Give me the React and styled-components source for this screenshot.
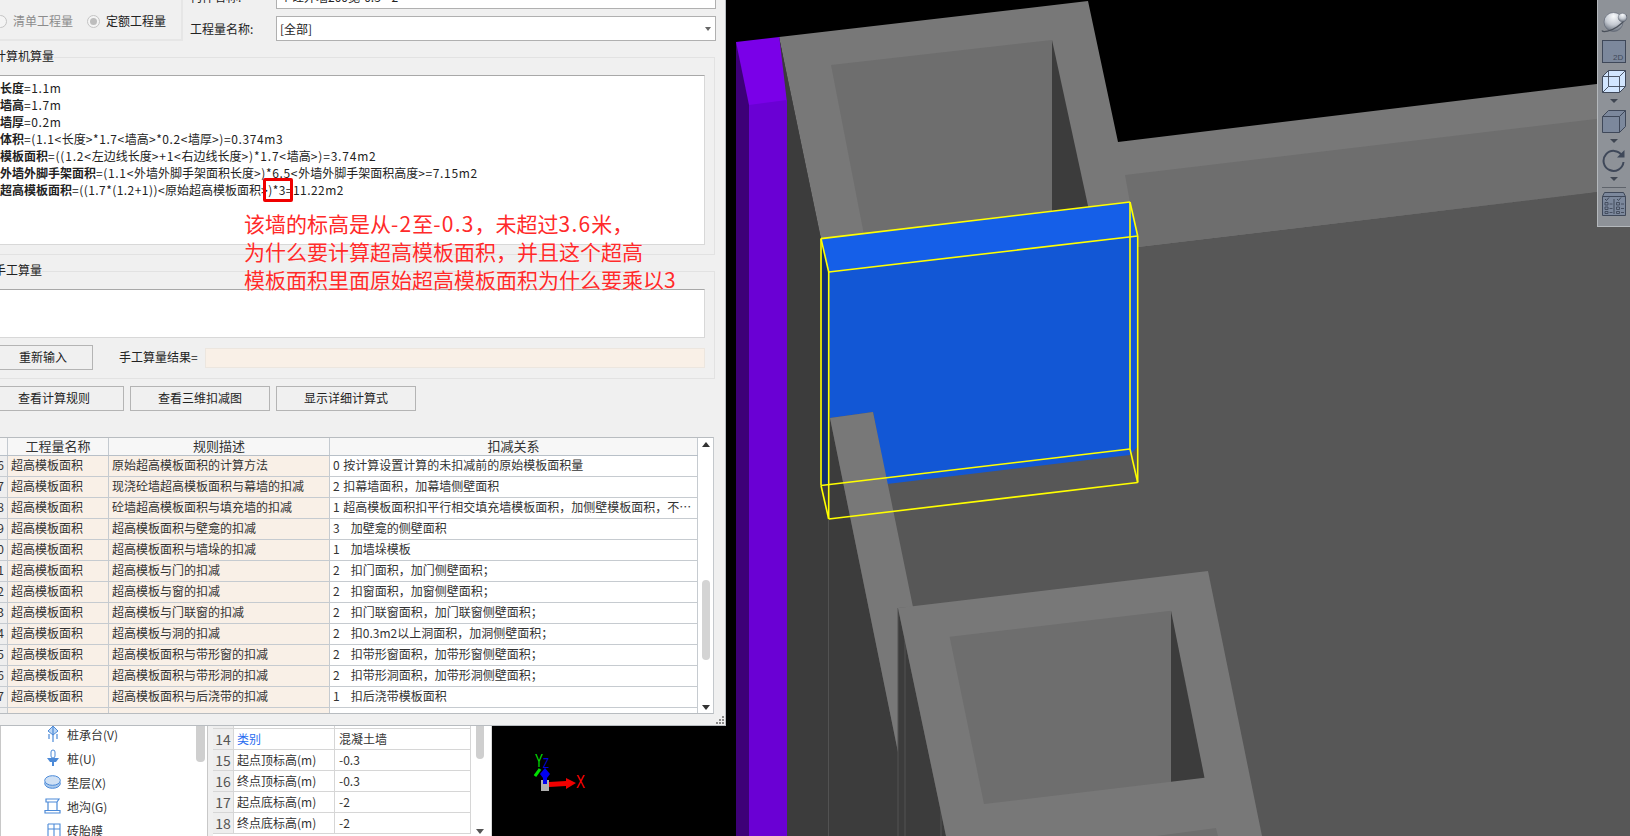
import React from "react";
import styled, { createGlobalStyle } from "styled-components";

const Global = createGlobalStyle`
  html, body { margin: 0; padding: 0; background: #f0f0f0; overflow: hidden; }
  * { box-sizing: border-box; }
  body { font-family: "Noto Sans CJK SC", "Noto Sans", sans-serif; font-size: 12px; color: #222; }
`;

const Page = styled.div`
  position: relative;
  width: 1630px;
  height: 836px;
  overflow: hidden;
  display: flex;
  background: #f0f0f0;
`;

/* ---------- app behind the dialog ---------- */
const TreePanel = styled.div`
  width: 208px;
  height: 836px;
  flex: none;
  background: #fff;
  border-left: 1px solid #c8c8c8;
  border-right: 1px solid #c8c8c8;
  display: flex;
  overflow: hidden;
  padding-top: 722px;
`;
const TreeList = styled.div`
  flex: 1;
  padding-left: 44px;
`;
const TreeItem = styled.div`
  height: 24px;
  display: flex;
  align-items: center;
  gap: 6px;
  color: #333;
  white-space: nowrap;
`;
const TreeScroll = styled.div`
  width: 9px;
  height: 40px;
  margin-right: 2px;
  background: #cfcfcf;
  border-radius: 0 0 4px 4px;
`;
const PropsPanel = styled.div`
  width: 279px;
  height: 836px;
  flex: none;
  margin-left: 5px;
  background: #fff;
  display: flex;
  overflow: hidden;
  padding-top: 708px;
`;
const PropsTable = styled.div`
  width: 258px;
  flex: none;
`;
const PropRow = styled.div`
  display: grid;
  grid-template-columns: 21px 101px 136px;
  height: 21px;
  border-bottom: 1px solid #d6d6d6;
  align-items: stretch;
`;
const PropNum = styled.div`
  background: #eeeeee;
  color: #555;
  font-size: 14px;
  line-height: 20px;
  text-align: center;
  border-right: 1px solid #d6d6d6;
`;
const PropName = styled.div`
  color: ${(p) => (p.$blue ? "#2a6cf0" : "#333")};
  line-height: 20px;
  padding-left: 3px;
  border-right: 1px solid #d6d6d6;
`;
const PropValue = styled.div`
  color: #333;
  line-height: 20px;
  padding-left: 4px;
  border-right: 1px solid #d6d6d6;
`;
const PropsScroll = styled.div`
  flex: 1;
  position: relative;
  border-right: 1px solid #d8d8d8;
`;
const PropsThumb = styled.div`
  position: absolute;
  left: 5px;
  top: 0;
  width: 8px;
  height: 51px;
  background: #cfcfcf;
  border-radius: 0 0 4px 4px;
`;
const PropsArrow = styled.div`
  position: absolute;
  left: 5px;
  top: 121px;
  border-left: 4px solid transparent;
  border-right: 4px solid transparent;
  border-top: 5px solid #555;
`;
const Viewport = styled.div`
  flex: 1;
  height: 836px;
  background: #000;
  overflow: hidden;
  svg { display: block; }
`;

/* ---------- dialog ---------- */
const Dialog = styled.div`
  position: absolute;
  left: -20px;
  top: -20px;
  width: 745.5px;
  height: 746px;
  background: #f0f0f0;
  border-right: 1px solid #b8bcc0;
  border-bottom: 1px solid #b8bcc0;
  display: flex;
  flex-direction: column;
`;
const TopRow = styled.div`
  height: 61px;
  flex: none;
  display: flex;
`;
const RadioGroup = styled.div`
  width: 203px;
  height: 61px;
  flex: none;
  border-right: 2px solid #e6e6e6;
  border-bottom: 2px solid #e6e6e6;
  display: flex;
  align-items: center;
  padding: 33px 0 10px 13.5px;
  gap: 13.5px;
`;
const RadioItem = styled.div`
  display: flex;
  align-items: center;
  gap: 6.5px;
  color: ${(p) => (p.$disabled ? "#8c8c8c" : "#222")};
  line-height: 20px;
  white-space: nowrap;
`;
const RadioDot = styled.span`
  width: 13px;
  height: 13px;
  flex: none;
  border-radius: 50%;
  border: 1px solid #c4c4c4;
  background: #f4f4f4;
  display: flex;
  align-items: center;
  justify-content: center;
  &::after {
    content: "";
    width: 7px;
    height: 7px;
    border-radius: 50%;
    background: ${(p) => (p.$on ? "#bdbdbd" : "transparent")};
  }
`;
const Fields = styled.div`
  flex: none;
  width: 525.5px;
  margin-left: 7px;
  padding-top: 4px;
  display: flex;
  flex-direction: column;
  gap: 7px;
`;
const FieldRow = styled.div`
  height: 25px;
  display: flex;
  align-items: center;
`;
const FieldLabel = styled.div`
  width: 86px;
  flex: none;
  color: #222;
`;
const SelectBox = styled.div`
  flex: 1;
  height: 25px;
  background: #fff;
  border: 1px solid #b0b0b0;
  padding-left: 3px;
  line-height: 24px;
  display: flex;
  justify-content: space-between;
  align-items: center;
  color: #222;
`;
const Caret = styled.span`
  margin-right: 4px;
  border-left: 3px solid transparent;
  border-right: 3px solid transparent;
  border-top: 4px solid #666;
`;
const Group = styled.fieldset`
  margin: ${(p) => p.$mt}px 9.5px 0 10px;
  height: ${(p) => p.$h}px;
  flex: none;
  border: 1px solid #e2e2e2;
  padding: 10px 9px 0 0;
  min-width: 0;
  display: flex;
  flex-direction: column;
`;
const Legend = styled.legend`
  margin-left: 3px;
  padding: 0;
  line-height: 14px;
  height: 16px;
  color: #222;
`;
const CalcBox = styled.div`
  height: 170px;
  background: #fff;
  border: 1px solid #d8d8d8;
  border-top: 1px solid #a8a8a8;
  padding: 3px 0 0 8px;
  line-height: 17px;
  color: #222;
  white-space: nowrap;
`;
const CalcLine = styled.div`
  height: 17px;
`;
const Strong = styled.span`
  font-weight: 700;
`;
const Latin = styled.span`
  letter-spacing: ${(p) => p.$gap}px;
`;
const ManualBox = styled.div`
  height: 49px;
  background: #fff;
  border: 1px solid #d8d8d8;
  border-top: 1px solid #a8a8a8;
  flex: none;
`;
const ManualRow = styled.div`
  margin-top: 7px;
  height: 25px;
  display: flex;
  align-items: center;
`;
const Btn = styled.button`
  width: ${(p) => p.$w}px;
  height: 25px;
  flex: none;
  margin: 0;
  padding: 0 0 2px;
  background: #f0f0f0;
  border: 1px solid #b4b4b4;
  font: inherit;
  color: #222;
`;
const ResetBtn = styled(Btn)`
  margin-left: 2px;
`;
const ResultLabel = styled.div`
  margin-left: 26px;
  width: 86px;
  padding-bottom: 2px;
  flex: none;
  white-space: nowrap;
`;
const ResultField = styled.div`
  flex: 1;
  height: 20px;
  background: #f9f0e7;
  border: 1px solid #ece6df;
`;
const ActionRow = styled.div`
  margin: 7px 0 0 4px;
  display: flex;
  gap: 6px;
`;
const RulesWrap = styled.div`
  margin-top: 26px;
  height: 277px;
  width: 734px;
  flex: none;
  display: flex;
  background: #fff;
  border-top: 1px solid #b8bcc0;
  border-bottom: 1px solid #b8bcc0;
  border-right: 1px solid #c4c8cc;
  overflow: hidden;
`;
const RulesBody = styled.div`
  width: 718px;
  flex: none;
`;
const HeaderRow = styled.div`
  display: grid;
  grid-template-columns: 28px 101px 221px 368px;
  height: 18px;
  border-bottom: 1px solid #b8c0c8;
  background: #f7f7f7;
`;
const HeaderCell = styled.div`
  font-size: 13px;
  line-height: 16px;
  text-align: center;
  color: #333;
  border-right: 1px solid #c4cad0;
`;
const RuleRow = styled.div`
  display: grid;
  grid-template-columns: 28px 101px 221px 368px;
  height: 21px;
  border-bottom: 1px solid #c6cbd0;
`;
const NumCell = styled.div`
  background: #eeeeee;
  line-height: 18px;
  text-align: right;
  padding-right: 3px;
  color: #333;
  border-right: 1px solid #c6cbd0;
`;
const Cell = styled.div`
  background: ${(p) => (p.$tinted ? "#f9f0e7" : "#fff")};
  line-height: 18px;
  padding-left: 3px;
  color: #333;
  white-space: pre;
  word-spacing: ${(p) => (p.$tinted ? 0 : 1)}px;
  overflow: hidden;
  text-overflow: ellipsis;
  border-right: 1px solid #c6cbd0;
`;
const ScrollTrack = styled.div`
  flex: 1;
  position: relative;
  display: flex;
  flex-direction: column;
  align-items: center;
`;
const ArrowUp = styled.div`
  margin-top: 4px;
  border-left: 4px solid transparent;
  border-right: 4px solid transparent;
  border-bottom: 5px solid #333;
`;
const Thumb = styled.div`
  width: 8px;
  height: 80px;
  margin-top: 133px;
  background: #d4d4d4;
  border-radius: 4px;
`;
const ArrowDown = styled.div`
  margin-top: auto;
  margin-bottom: 3px;
  border-left: 4px solid transparent;
  border-right: 4px solid transparent;
  border-top: 5px solid #333;
`;
const Footer = styled.div`
  flex: 1;
  display: flex;
  justify-content: flex-end;
  align-items: flex-end;
  padding: 0 1px 1px 0;
`;

/* ---------- overlays ---------- */
const RedBox = styled.div`
  position: absolute;
  left: 263px;
  top: 178px;
  width: 30px;
  height: 24px;
  border: 3px solid #f00000;
  border-radius: 2px;
`;
const Note = styled.div`
  position: absolute;
  left: 244px;
  top: 209px;
  font-size: 21px;
  line-height: 28px;
  color: #ff2a2a;
  white-space: nowrap;
  text-shadow: 0 0 1px #fff;
`;
const Toolbar = styled.div`
  position: absolute;
  right: 0;
  top: 0;
  width: 33px;
  height: 227px;
  background: #8e9298;
  border-left: 1px solid #b4b8bc;
  border-bottom: 1px solid #b4b8bc;
  display: flex;
  flex-direction: column;
  align-items: center;
  padding-top: 11px;
`;
const ToolIcon = styled.svg`
  display: block;
  flex: none;
  margin-top: ${(p) => p.$mt || 0}px;
`;
const ToolCaret = styled.div`
  margin-top: ${(p) => p.$mt || 6}px;
  border-left: 4px solid transparent;
  border-right: 4px solid transparent;
  border-top: 4px solid #3f4652;
`;
const ToolRule = styled.div`
  width: 24px;
  height: 1px;
  background: #5e636b;
  margin-top: 6px;
`;

const C = "#3f4859";
const F = "#7c889c";

const withLatin = (text, gap) =>
  text.split(/([\x21-\x7e]+)/).map((part, i) =>
    /[\x21-\x7e]/.test(part) ? <Latin key={i} $gap={gap}>{part}</Latin> : part
  );

const GlobeIcon = () => (
  <ToolIcon width="27" height="22" viewBox="0 0 27 22">
    <defs>
      <radialGradient id="gb" cx="0.5" cy="0.2" r="0.9">
        <stop offset="0" stopColor="#f8fafc" />
        <stop offset="0.5" stopColor="#c4c9d1" />
        <stop offset="1" stopColor="#4e5663" />
      </radialGradient>
    </defs>
    <circle cx="12.5" cy="11" r="9.5" fill="url(#gb)" stroke="#5a6270" strokeWidth=".6" />
    <path d="M1 19.5 C2 22 10 20 16 16 C22 12 26 7 25 4" fill="none" stroke="#4a505a" strokeWidth="1.4" />
    <circle cx="21.5" cy="6.5" r="4.3" fill="url(#gb)" stroke="#5a6270" strokeWidth=".5" />
  </ToolIcon>
);
const TwoDIcon = () => (
  <ToolIcon $mt={7} width="24" height="23" viewBox="0 0 24 23">
    <rect x=".5" y=".5" width="23" height="22" fill={F} stroke={C} />
    <text x="11" y="20" fontSize="8" fill={C} fontFamily="Liberation Sans, sans-serif">2D</text>
  </ToolIcon>
);
const WireCube = () => (
  <ToolIcon $mt={7} width="24" height="23" viewBox="0 0 24 23">
    <path d="M.5 6.5 L6.5 .5 H23.5 V16.5 L17.5 22.5 H.5 Z" fill="#d2e6ff" stroke={C} />
    <path d="M6.5 .5 V16.5 H23.5 M6.5 16.5 L.5 22.5 M.5 6.5 H17.5 V22.5 M17.5 6.5 L23.5 .5" fill="none" stroke={C} strokeWidth=".9" />
  </ToolIcon>
);
const SolidCube = () => (
  <ToolIcon $mt={7} width="24" height="23" viewBox="0 0 24 23">
    <path d="M.5 6.5 L6.5 .5 H23.5 V16.5 L17.5 22.5 H.5 Z" fill={F} stroke={C} />
    <path d="M.5 6.5 H17.5 V22.5 M17.5 6.5 L23.5 .5" fill="none" stroke={C} />
  </ToolIcon>
);
const RefreshIcon = () => (
  <ToolIcon $mt={6} width="26" height="23" viewBox="0 0 26 23">
    <path d="M21 6.5 A10 10 0 1 0 22.5 13" fill="none" stroke={C} strokeWidth="2" />
    <path d="M23.5 1 V8.5 H16 Z" fill={C} />
  </ToolIcon>
);
const ChecklistIcon = () => (
  <ToolIcon $mt={4} width="24" height="24" viewBox="0 0 24 24">
    <path d="M.5 4.5 L2.5 .5 H21.5 L23.5 4.5 V23.5 H.5 Z" fill={F} stroke={C} />
    <path d="M.5 4.5 H23.5 M12 7 V22" stroke={C} fill="none" />
    <path d="M3 7 l1.5 1.5 L7 5.5 M15 7 l1.5 1.5 L19 5.5" stroke={C} fill="none" />
    <path d="M3 10.5 h3 v2.5 h-3 z M3 15 h3 v2.5 h-3 z M3 19.5 h3 v2 h-3 z M14.5 10.5 h3 v2.5 h-3 z M14.5 15 h3 v2.5 h-3 z M14.5 19.5 h3 v2 h-3 z M7.5 12 h3 M7.5 16.5 h3 M7.5 20.5 h3 M19 12 h3 M19 16.5 h3 M19 20.5 h3" stroke={C} fill="none" strokeWidth=".9" />
  </ToolIcon>
);

const B = "#4c8ad8";
const PileCapIcon = () => (
  <svg width="16" height="18" viewBox="0 0 16 18">
    <path d="M8 1 L13 6 L8 10 L3 6 Z" fill="#bcd6f4" stroke={B} />
    <path d="M8 1 V17 M4 9 V14 M12 9 V14" stroke={B} fill="none" strokeWidth="1.2" />
  </svg>
);
const PileIcon = () => (
  <svg width="16" height="18" viewBox="0 0 16 18">
    <rect x="6" y="1" width="4" height="8" rx="2" fill="#fff" stroke={B} />
    <path d="M2 9 H14 L11 13 H5 Z" fill={B} />
    <path d="M8 13 V17" stroke={B} strokeWidth="2" />
  </svg>
);
const PadIcon = () => (
  <svg width="17" height="14" viewBox="0 0 17 14" style={{ marginLeft: -1 }}>
    <ellipse cx="8.5" cy="8.5" rx="7.8" ry="4.8" fill="#a8c8ec" stroke={B} />
    <ellipse cx="8.5" cy="5.5" rx="7.8" ry="4.8" fill="#cfe0f4" stroke={B} />
  </svg>
);
const TrenchIcon = () => (
  <svg width="17" height="16" viewBox="0 0 17 16" style={{ marginLeft: -1 }}>
    <path d="M2 1 H15 L13 4 H2 Z M4 4 V12 M13 4 V12 M1 12.5 H16 V15 H1 Z" fill="#fff" stroke={B} strokeWidth="1.2" />
  </svg>
);
const BrickIcon = () => (
  <svg width="14" height="14" viewBox="0 0 14 14" style={{ marginLeft: 2 }}>
    <path d="M1 1 H13 V14 M1 1 V14 M7 1 V14 M1 6 H13" fill="#fff" stroke={B} strokeWidth="1.1" />
  </svg>
);

const rules = [
  ["16", "原始超高模板面积的计算方法", "0 按计算设置计算的未扣减前的原始模板面积量"],
  ["17", "现浇砼墙超高模板面积与幕墙的扣减", "2 扣幕墙面积，加幕墙侧壁面积"],
  ["18", "砼墙超高模板面积与填充墙的扣减", "1 超高模板面积扣平行相交填充墙模板面积，加侧壁模板面积，不计算相交部分的面积"],
  ["19", "超高模板面积与壁龛的扣减", "3   加壁龛的侧壁面积"],
  ["20", "超高模板面积与墙垛的扣减", "1   加墙垛模板"],
  ["21", "超高模板与门的扣减", "2   扣门面积，加门侧壁面积；"],
  ["22", "超高模板与窗的扣减", "2   扣窗面积，加窗侧壁面积；"],
  ["23", "超高模板与门联窗的扣减", "2   扣门联窗面积，加门联窗侧壁面积；"],
  ["24", "超高模板与洞的扣减", "2   扣0.3m2以上洞面积，加洞侧壁面积；"],
  ["25", "超高模板面积与带形窗的扣减", "2   扣带形窗面积，加带形窗侧壁面积；"],
  ["26", "超高模板面积与带形洞的扣减", "2   扣带形洞面积，加带形洞侧壁面积；"],
  ["27", "超高模板面积与后浇带的扣减", "1   扣后浇带模板面积"],
];

const calc = [
  ["长度", "=1.1m", 0.6],
  ["墙高", "=1.7m", 0.6],
  ["墙厚", "=0.2m", 0.6],
  ["体积", "=(1.1<长度>*1.7<墙高>*0.2<墙厚>)=0.374m3", 0.6],
  ["模板面积", "=((1.2<左边线长度>+1<右边线长度>)*1.7<墙高>)=3.74m2", 0.8],
  ["外墙外脚手架面积", "=(1.1<外墙外脚手架面积长度>)*6.5<外墙外脚手架面积高度>=7.15m2", 0.65],
  ["超高模板面积", "=((1.7*(1.2+1))<原始超高模板面积>)*3=11.22m2", 0.45],
];

const props = [
  ["13", "", "", false],
  ["14", "类别", "混凝土墙", true],
  ["15", "起点顶标高(m)", "-0.3", false],
  ["16", "终点顶标高(m)", "-0.3", false],
  ["17", "起点底标高(m)", "-2", false],
  ["18", "终点底标高(m)", "-2", false],
];

const box = {
  A: "821,238.6", B: "1130,202", C: "1137.7,236", D: "828.7,272",
  E: "821,485.5", F: "1130,449", G: "1137.7,482.5", H: "828.7,519",
};
const edges = ["AB", "BC", "CD", "DA", "EF", "FG", "GH", "HE", "AE", "BF", "CG", "DH"];

const Scene = () => (
  <svg width="1138" height="836" viewBox="492 0 1138 836">
    <rect x="492" y="0" width="1138" height="836" fill="#000" />
    <polygon points="787,240 1138,246 1630,188 1630,836 787,836" fill="#575757" />
    <polygon points="779,37 1088,1 1118,142 1630,80 1630,188 1138,247 821,260" fill="#787878" />
    <polygon points="1125,175 1630,115 1630,188 1138,247" fill="#6e6e6e" />
    <polygon points="831,65 1052,40 1052,215 865,240" fill="#6e6e6e" />
    <polygon points="1052,40 1090,215 1052,215" fill="#3c3c3c" />
    <polygon points="779,37 821,239 830,418 898,752 898,608 946,836 787,836" fill="#3c3c3c" />
    <polygon points="779,37 821,239 830,300 790,300 787,100" fill="#3c3c3c" />
    <polygon points="822,240 829,272 829,485 822,485" fill="#10306e" />
    <polygon points="821,238.6 1130,202 1137.7,236 828.7,272" fill="#155fe8" />
    <polygon points="829,272 1138,236 1138,446 1130,455 887,484 873,412 830,418" fill="#1257d5" />
    <polygon points="830,418 873,412 913,607 898,608 898,752" fill="#787878" />
    <path d="M828.5 520 V836 M898 608 V836 M905 640 V836 M941 810 V836" stroke="#525252" strokeWidth="1" fill="none" />
    <polygon points="898,608 1208,571 1262,836 946,836" fill="#787878" />
    <polygon points="949.6,636.7 1171,610.7 1171,781.7 984,804" fill="#6e6e6e" />
    <polygon points="1171,610.7 1204.5,777.7 1171,781.7" fill="#3c3c3c" />
    <polygon points="1156,836 1216,828 1218,836" fill="#6e6e6e" />
    <rect x="736" y="42" width="13" height="794" fill="#3d0078" />
    <rect x="749" y="100" width="38" height="736" fill="#6a00d4" />
    <polygon points="736,42 779.3,37 786.7,100 749,105" fill="#7a00e8" />
    {edges.map((e) => {
      const [x1, y1] = box[e[0]].split(",");
      const [x2, y2] = box[e[1]].split(",");
      return <line key={e} x1={x1} y1={y1} x2={x2} y2={y2} stroke="#ffff00" strokeWidth="1.6" />;
    })}
    <rect x="541" y="780" width="8" height="11" fill="#b0b0b0" />
    <path d="M549 782 L566 781 V778 L576 783 L566 789 V786 L549 787 Z" fill="#f00000" />
    <path d="M540 769 L535 776 L538 772 Z" fill="#00e000" stroke="#00e000" strokeWidth="3" />
    <path d="M545 768 L550 774 L547 778 V784 H543 V778 L540 774 Z" fill="#0000f0" />
    <text x="576" y="788" fontSize="18" fill="#ff0000" fontFamily="Liberation Sans, sans-serif" textLength="9" lengthAdjust="spacingAndGlyphs">X</text>
    <text x="535" y="767" fontSize="18" fill="#00e000" fontFamily="Liberation Sans, sans-serif" textLength="8" lengthAdjust="spacingAndGlyphs">Y</text>
    <text x="543" y="768" fontSize="15" fill="#0000e0" fontFamily="Liberation Sans, sans-serif" textLength="6" lengthAdjust="spacingAndGlyphs">Z</text>
  </svg>
);

export default function App() {
  return (
    <Page>
      <Global />
      <TreePanel>
        <TreeList>
          <TreeItem><PileCapIcon />桩承台(V)</TreeItem>
          <TreeItem><PileIcon />桩(U)</TreeItem>
          <TreeItem><PadIcon />垫层(X)</TreeItem>
          <TreeItem><TrenchIcon />地沟(G)</TreeItem>
          <TreeItem><BrickIcon />砖胎膜</TreeItem>
        </TreeList>
        <TreeScroll />
      </TreePanel>
      <PropsPanel>
        <PropsTable>
          {props.map(([n, name, v, blue]) => (
            <PropRow key={n}>
              <PropNum>{n}</PropNum>
              <PropName $blue={blue}>{name}</PropName>
              <PropValue>{v}</PropValue>
            </PropRow>
          ))}
        </PropsTable>
        <PropsScroll>
          <PropsThumb />
          <PropsArrow />
        </PropsScroll>
      </PropsPanel>
      <Viewport>
        <Scene />
      </Viewport>

      <Toolbar>
        <GlobeIcon />
        <TwoDIcon />
        <WireCube />
        <ToolCaret />
        <SolidCube />
        <ToolCaret />
        <RefreshIcon />
        <ToolCaret $mt={5} />
        <ToolRule />
        <ChecklistIcon />
      </Toolbar>

      <Dialog>
        <TopRow>
          <RadioGroup>
            <RadioItem $disabled><RadioDot />清单工程量</RadioItem>
            <RadioItem><RadioDot $on />定额工程量</RadioItem>
          </RadioGroup>
          <Fields>
            <FieldRow>
              <FieldLabel>构件名称:</FieldLabel>
              <SelectBox>个砼外墙200宽-0.3~-2</SelectBox>
            </FieldRow>
            <FieldRow>
              <FieldLabel>工程量名称:</FieldLabel>
              <SelectBox>[全部]<Caret /></SelectBox>
            </FieldRow>
          </Fields>
        </TopRow>

        <Group $mt={8} $h={206}>
          <Legend>计算机算量</Legend>
          <CalcBox>
            {calc.map(([a, b, gap]) => (
              <CalcLine key={a}><Strong>{a}</Strong>{withLatin(b, gap)}</CalcLine>
            ))}
          </CalcBox>
        </Group>

        <Group $mt={8} $h={116}>
          <Legend>手工算量</Legend>
          <ManualBox />
          <ManualRow>
            <ResetBtn $w={100}>重新输入</ResetBtn>
            <ResultLabel>手工算量结果=</ResultLabel>
            <ResultField />
          </ManualRow>
        </Group>

        <ActionRow>
          <Btn $w={140}>查看计算规则</Btn>
          <Btn $w={140}>查看三维扣减图</Btn>
          <Btn $w={140}>显示详细计算式</Btn>
        </ActionRow>

        <RulesWrap>
          <RulesBody>
            <HeaderRow>
              <HeaderCell />
              <HeaderCell>工程量名称</HeaderCell>
              <HeaderCell>规则描述</HeaderCell>
              <HeaderCell>扣减关系</HeaderCell>
            </HeaderRow>
            {rules.map(([n, d, r]) => (
              <RuleRow key={n}>
                <NumCell>{n}</NumCell>
                <Cell $tinted>超高模板面积</Cell>
                <Cell $tinted>{d}</Cell>
                <Cell>{r}</Cell>
              </RuleRow>
            ))}
            <RuleRow>
              <NumCell />
              <Cell $tinted />
              <Cell $tinted />
              <Cell />
            </RuleRow>
          </RulesBody>
          <ScrollTrack>
            <ArrowUp />
            <Thumb />
            <ArrowDown />
          </ScrollTrack>
        </RulesWrap>
        <Footer>
          <svg width="8" height="8" viewBox="0 0 8 8">
            <path d="M6 0h2v2H6zM3 3h2v2H3zM6 3h2v2H6zM0 6h2v2H0zM3 6h2v2H3zM6 6h2v2H6z" fill="#8a8a8a" />
          </svg>
        </Footer>
      </Dialog>

      <RedBox />
      <Note>
        {withLatin("该墙的标高是从-2至-0.3，未超过3.6米，", 1.2)}
        <br />
        为什么要计算超高模板面积，并且这个超高
        <br />
        {withLatin("模板面积里面原始超高模板面积为什么要乘以3", 1.2)}
      </Note>
    </Page>
  );
}
